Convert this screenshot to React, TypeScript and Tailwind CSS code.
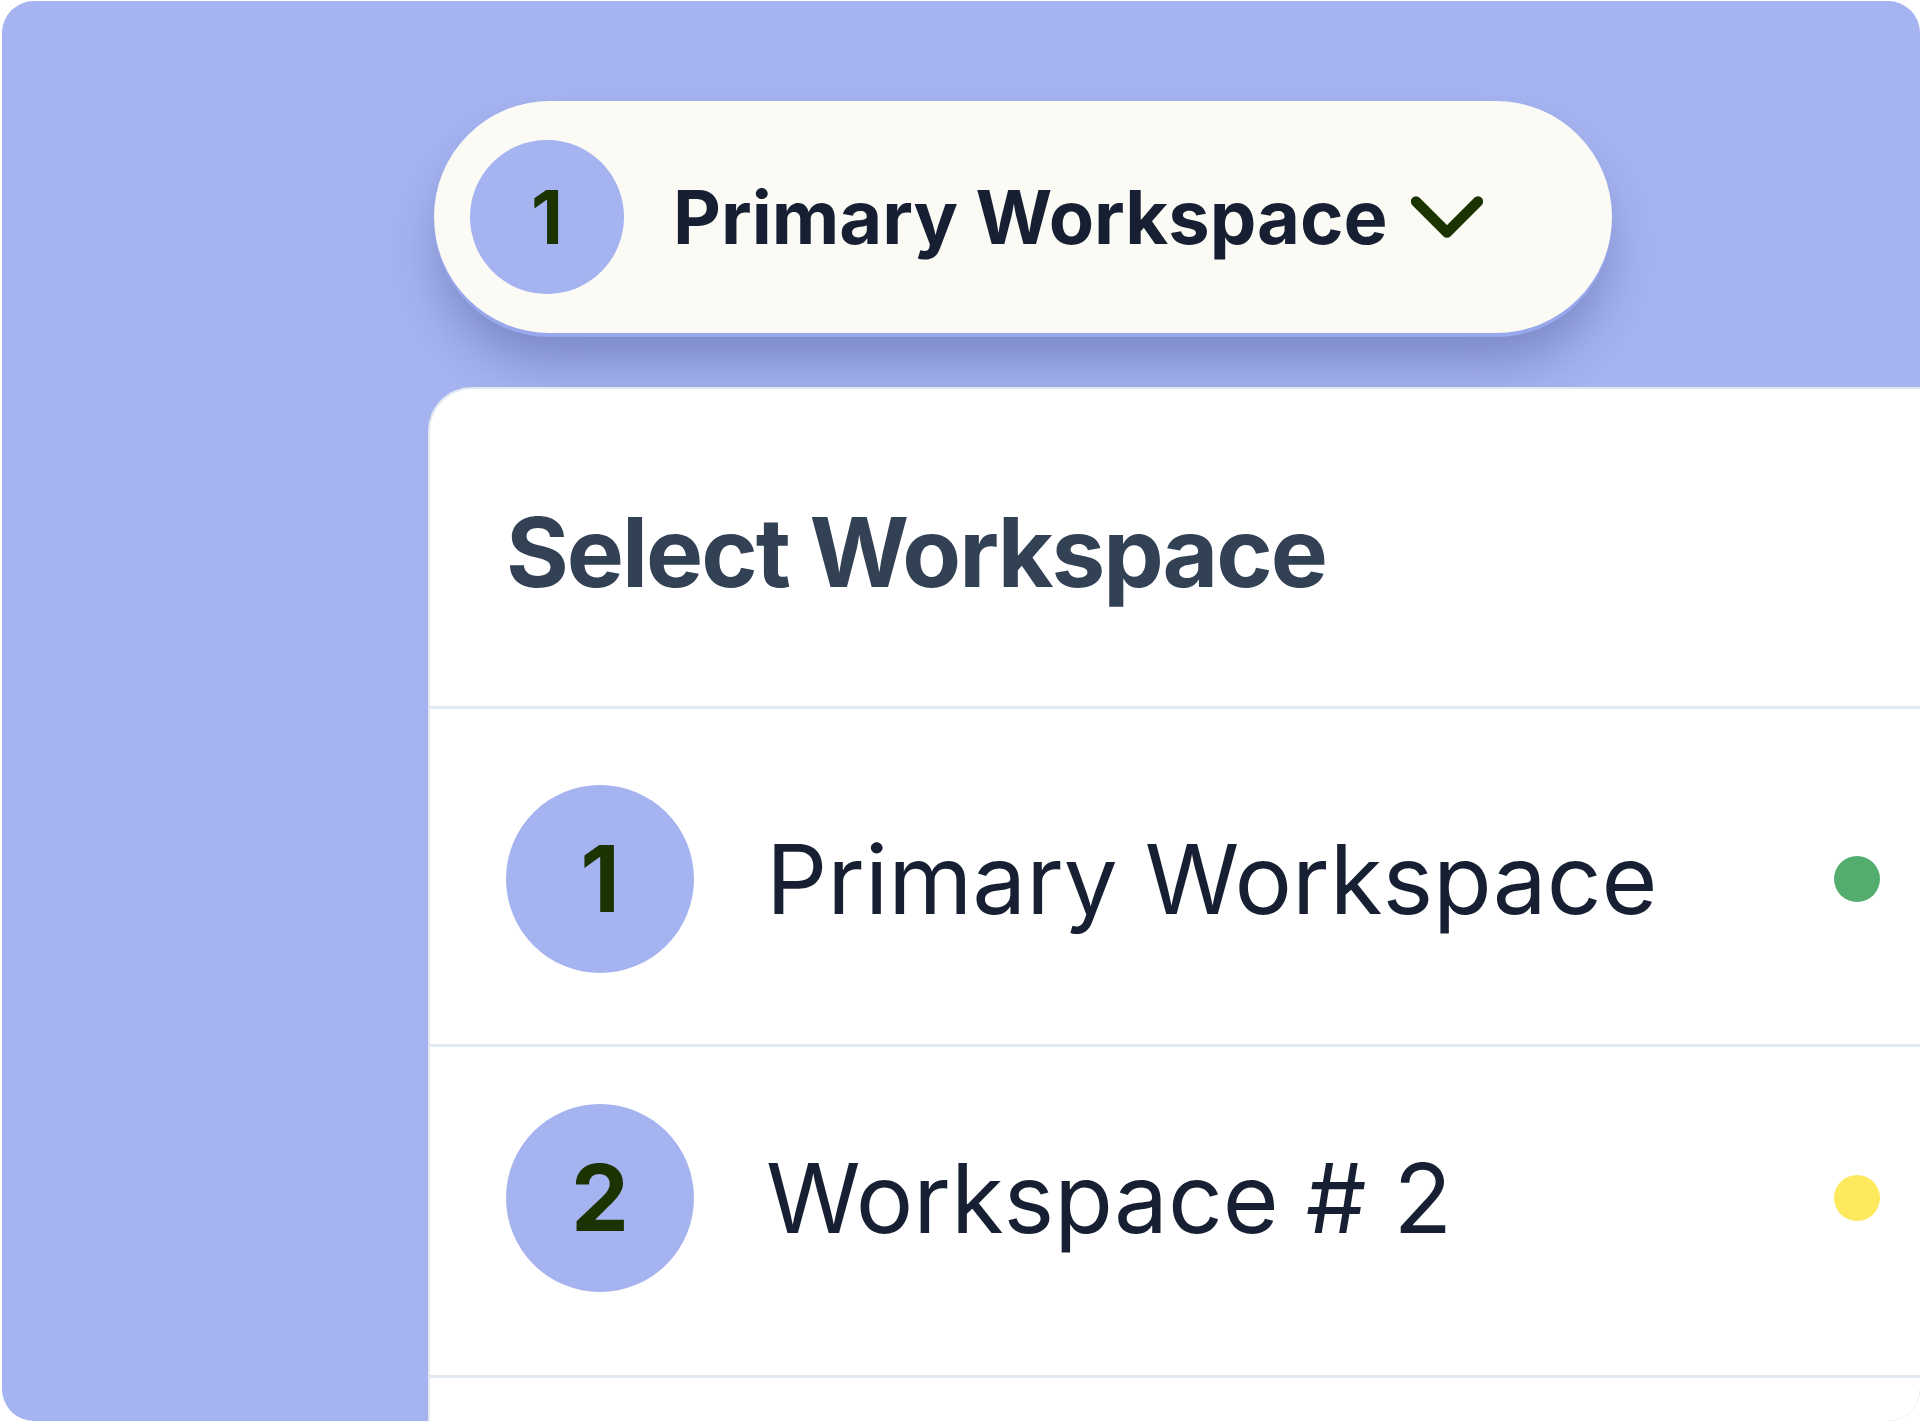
import React from "react";
import { ChevronDown } from "lucide-react";

export default function App() {
  return (
    <div className="w-[1920px] h-[1421px] bg-white overflow-hidden font-['Inter',sans-serif]">
      <div className="ml-[2px] mt-[1px] w-[1918px] h-[1420px] rounded-[32px] overflow-hidden bg-[#a5b3f0] pl-[426px] pt-[100px]">
        {/* Dropdown pill */}
        <div className="relative z-0 ml-[6px] w-[1178px] h-[232px] rounded-full bg-[#fbfaf4] flex items-center pl-[36px] shadow-[0_4px_0_0_#99a8ec,0_34px_50px_-6px_rgba(35,45,110,0.33)]">
          <div className="w-[154px] h-[154px] rounded-full bg-[#a5b3f0] flex items-center justify-center">
            <span className="text-[74px] leading-none font-bold text-[#1a3300]">1</span>
          </div>
          <span className="ml-[49px] text-[74px] leading-none font-bold text-[#172033] whitespace-nowrap">
            Primary Workspace
          </span>
          <ChevronDown size={124} strokeWidth={2} color="#1a3300" className="-ml-[3px] shrink-0" />
        </div>

        {/* Card */}
        <div className="relative z-10 mt-[54px] w-[1700px] h-[1100px] bg-white border-l-2 border-t-2 border-[#e2e8f0] rounded-tl-[44px]">
          <div className="pl-[76px] pt-[115px] pb-[106px]">
            <h1 className="text-[96px] leading-none font-bold tracking-[-0.021em] text-[#334155] whitespace-nowrap">
              Select Workspace
            </h1>
          </div>
          <div className="h-[3px] bg-[#e2e8f0]" />
          <div className="pl-[76px] pt-[76px] pb-[71px]">
            <div className="w-[1374px] flex items-center">
              <div className="w-[188px] h-[188px] rounded-full bg-[#a5b3f0] flex items-center justify-center shrink-0">
                <span className="text-[92px] leading-none font-bold text-[#1a3300]">1</span>
              </div>
              <span className="ml-[72px] flex-1 text-[96px] leading-none font-normal text-[#172033] whitespace-nowrap">
                Primary Workspace
              </span>
              <div className="w-[46px] h-[46px] rounded-full bg-[#53ad6f] shrink-0" />
            </div>
          </div>
          <div className="h-[3px] bg-[#e2e8f0]" />
          <div className="pl-[76px] pt-[57px] pb-[83px]">
            <div className="w-[1374px] flex items-center">
              <div className="w-[188px] h-[188px] rounded-full bg-[#a5b3f0] flex items-center justify-center shrink-0">
                <span className="text-[92px] leading-none font-bold text-[#1a3300]">2</span>
              </div>
              <span className="ml-[72px] flex-1 text-[96px] leading-none font-normal text-[#172033] whitespace-nowrap">
                Workspace # 2
              </span>
              <div className="w-[46px] h-[46px] rounded-full bg-[#fde95b] shrink-0" />
            </div>
          </div>
          <div className="h-[3px] bg-[#e2e8f0]" />
        </div>
      </div>
    </div>
  );
}
